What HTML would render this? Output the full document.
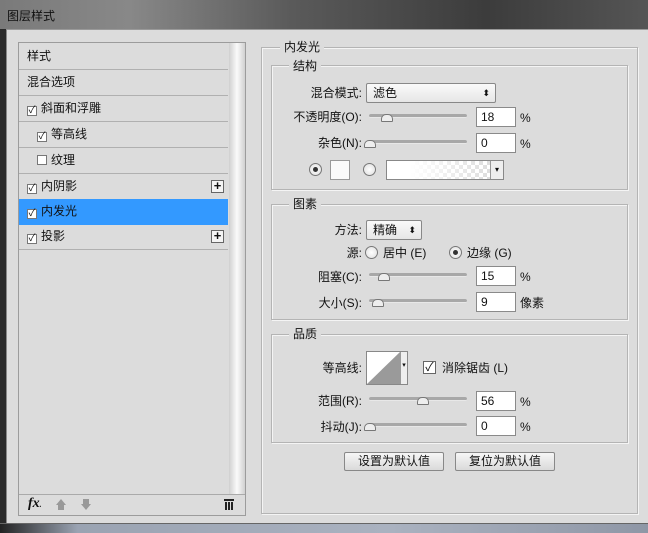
<!DOCTYPE html>
<html><head><meta charset="utf-8"><style>
*{margin:0;padding:0;box-sizing:border-box}
body{width:648px;height:533px;overflow:hidden;background:#dcdcdc;font-family:"Liberation Sans","Noto Sans CJK SC",sans-serif;font-size:12px;color:#111;position:relative}
.a{position:absolute}
.t{position:absolute;white-space:nowrap;line-height:14px}
.r{text-align:right}
.box{position:absolute;border:1px solid #b4b4b4;box-shadow:1px 1px 0 #f4f4f4, inset 1px 1px 0 #f4f4f4}
.lg{position:absolute;background:#dcdcdc;padding:0 4px;line-height:14px}
.inp{position:absolute;background:#fff;border:1px solid #8a8a8a;height:20px;width:40px;padding-left:4px;line-height:18px}
.sl{position:absolute;height:4px;width:98px;background:#a8a8a8;border-radius:2px;border-bottom:1px solid #e8e8e8}
.th{position:absolute;width:12px;height:8px;background:#eee;border:1px solid #777;border-radius:5px 5px 1px 1px}
.rad{position:absolute;width:13px;height:13px;border-radius:50%;border:1px solid #777;background:radial-gradient(#fff,#ddd)}
.sel{position:absolute;background:linear-gradient(#fafafa,#e6e6e6);border:1px solid #888;border-radius:2px;height:20px;line-height:18px;padding-left:6px}
.btn{position:absolute;background:linear-gradient(#f6f6f6,#dadada);border:1px solid #888;border-radius:2px;height:19px;line-height:17px;text-align:center}
.it{position:absolute;left:19px;width:209px;height:26px;border-bottom:1px solid #b0b0b0;line-height:25px;padding-left:8px}
.cb{display:inline-block;width:10px;height:10px;border:1px solid #777;background:#fff;vertical-align:-1px;margin-right:4px;position:relative;font-size:10px;line-height:8px;text-align:center}
.plus{position:absolute;right:4px;top:6px;width:13px;height:13px;border:1px solid #666;background:#f4f4f4;font-size:13px;line-height:10px;text-align:center;font-weight:bold}
</style></head><body>
<div class="a" style="left:0;top:0;width:648px;height:30px;background:linear-gradient(90deg,#7a7a7a 0%,#888 20%,#5a5a5a 45%,#3c3c3c 75%,#555 100%)"></div>
<div class="t" style="left:7px;top:9px;color:#111">图层样式</div>
<div class="a" style="left:0;top:29px;width:6px;height:504px;background:#2a2a2a"></div>
<div class="a" style="left:6px;top:29px;width:642px;height:494px;background:#dcdcdc;border-top:1px solid #999;border-left:1px solid #888"></div>
<div class="a" style="left:0;top:523px;width:648px;height:10px;background:linear-gradient(90deg,#222 0%,#9aa3b2 12%,#aab2c0 60%,#8f97a6 100%);border-top:1px solid #666"></div>

<div class="a" style="left:18px;top:42px;width:228px;height:474px;border:1px solid #9c9c9c;background:#dcdcdc"></div>
<div class="a" style="left:229px;top:43px;width:16px;height:451px;background:linear-gradient(90deg,#d0d0d0,#fafafa 50%,#d0d0d0)"></div>
<div class="it" style="top:44px">样式</div>
<div class="it" style="top:70px">混合选项</div>
<div class="it" style="top:96px"><span class="cb">✓</span>斜面和浮雕</div>
<div class="it" style="top:122px;padding-left:18px"><span class="cb">✓</span>等高线</div>
<div class="it" style="top:148px;padding-left:18px"><span class="cb"></span>纹理</div>
<div class="it" style="top:174px"><span class="cb">✓</span>内阴影<span class="plus">+</span></div>
<div class="it" style="top:199px;background:#3399ff;border-bottom-color:#3399ff"><span class="cb">✓</span>内发光</div>
<div class="it" style="top:224px"><span class="cb">✓</span>投影<span class="plus">+</span></div>
<div class="a" style="left:19px;top:494px;width:226px;height:1px;background:#aaa"></div>
<div class="t" style="left:28px;top:497px;font-style:italic;font-weight:bold;font-family:'Liberation Serif',serif;font-size:14px">fx<span style="font-size:8px">.</span></div>
<div class="a" style="left:56px;top:499px;width:0;height:0;border:5px solid transparent;border-bottom:6px solid #999;border-top:0"></div>
<div class="a" style="left:58px;top:505px;width:6px;height:5px;background:#999"></div>
<div class="a" style="left:83px;top:499px;width:6px;height:5px;background:#999"></div>
<div class="a" style="left:81px;top:504px;width:0;height:0;border:5px solid transparent;border-top:6px solid #999;border-bottom:0"></div>
<div class="a" style="left:224px;top:499px;width:10px;height:2px;background:#222"></div>
<div class="a" style="left:225px;top:502px;width:8px;height:8px;background:repeating-linear-gradient(90deg,#222 0 2px,#ddd 2px 3px)"></div>

<div class="box" style="left:261px;top:47px;width:377px;height:467px"></div>
<div class="lg" style="left:280px;top:40px">内发光</div>

<div class="box" style="left:271px;top:65px;width:357px;height:125px"></div>
<div class="lg" style="left:289px;top:59px">结构</div>
<div class="t r" style="left:280px;width:82px;top:86px">混合模式:</div>
<div class="sel" style="left:366px;top:83px;width:130px">滤色<span style="position:absolute;right:5px;top:0;font-size:9px">⬍</span></div>
<div class="t r" style="left:280px;width:82px;top:110px">不透明度(O):</div>
<div class="sl" style="left:369px;top:114px"></div><div class="th" style="left:381px;top:114px"></div>
<div class="inp" style="left:476px;top:107px">18</div><div class="t" style="left:520px;top:111px">%</div>
<div class="t r" style="left:280px;width:82px;top:136px">杂色(N):</div>
<div class="sl" style="left:369px;top:140px"></div><div class="th" style="left:364px;top:140px"></div>
<div class="inp" style="left:476px;top:133px">0</div><div class="t" style="left:520px;top:137px">%</div>
<div class="rad" style="left:309px;top:163px"><div class="a" style="left:3px;top:3px;width:5px;height:5px;border-radius:50%;background:#333"></div></div>
<div class="a" style="left:330px;top:160px;width:20px;height:20px;background:#fafafa;border:1px solid #999"></div>
<div class="rad" style="left:363px;top:163px"></div>
<div class="a" style="left:386px;top:160px;width:118px;height:20px;border:1px solid #888;background:linear-gradient(90deg,#fff 20%,rgba(255,255,255,0) 90%),repeating-conic-gradient(#ddd 0 25%,#fff 0 50%) 0 0/8px 8px"></div>
<div class="a" style="left:490px;top:161px;width:13px;height:18px;background:#eee;border-left:1px solid #999;font-size:8px;text-align:center;line-height:18px">▾</div>

<div class="box" style="left:271px;top:204px;width:357px;height:116px"></div>
<div class="lg" style="left:289px;top:197px">图素</div>
<div class="t r" style="left:280px;width:82px;top:223px">方法:</div>
<div class="sel" style="left:366px;top:220px;width:56px">精确<span style="position:absolute;right:5px;top:0;font-size:9px">⬍</span></div>
<div class="t r" style="left:280px;width:82px;top:246px">源:</div>
<div class="rad" style="left:365px;top:246px"></div><div class="t" style="left:383px;top:246px">居中 (E)</div>
<div class="rad" style="left:449px;top:246px"><div class="a" style="left:3px;top:3px;width:5px;height:5px;border-radius:50%;background:#333"></div></div><div class="t" style="left:467px;top:246px">边缘 (G)</div>
<div class="t r" style="left:280px;width:82px;top:270px">阻塞(C):</div>
<div class="sl" style="left:369px;top:273px"></div><div class="th" style="left:378px;top:273px"></div>
<div class="inp" style="left:476px;top:266px">15</div><div class="t" style="left:520px;top:270px">%</div>
<div class="t r" style="left:280px;width:82px;top:296px">大小(S):</div>
<div class="sl" style="left:369px;top:299px"></div><div class="th" style="left:372px;top:299px"></div>
<div class="inp" style="left:476px;top:292px">9</div><div class="t" style="left:520px;top:296px">像素</div>

<div class="box" style="left:271px;top:334px;width:357px;height:109px"></div>
<div class="lg" style="left:289px;top:327px">品质</div>
<div class="t r" style="left:280px;width:82px;top:361px">等高线:</div>
<div class="a" style="left:366px;top:351px;width:42px;height:34px;border:1px solid #888;background:#fff"></div>
<svg class="a" style="left:367px;top:352px" width="33" height="32"><polygon points="0,32 33,0 33,32" fill="#9a9a9a"/></svg>
<div class="a" style="left:400px;top:352px;width:7px;height:32px;background:#eee;border-left:1px solid #999;font-size:7px;text-align:center;line-height:28px">▾</div>
<div class="a" style="left:423px;top:361px;width:13px;height:13px;border:1px solid #666;background:#fff;font-size:12px;line-height:11px;text-align:center">✓</div>
<div class="t" style="left:442px;top:361px">消除锯齿 (L)</div>
<div class="t r" style="left:280px;width:82px;top:394px">范围(R):</div>
<div class="sl" style="left:369px;top:397px"></div><div class="th" style="left:417px;top:397px"></div>
<div class="inp" style="left:476px;top:391px">56</div><div class="t" style="left:520px;top:395px">%</div>
<div class="t r" style="left:280px;width:82px;top:420px">抖动(J):</div>
<div class="sl" style="left:369px;top:423px"></div><div class="th" style="left:364px;top:423px"></div>
<div class="inp" style="left:476px;top:416px">0</div><div class="t" style="left:520px;top:420px">%</div>

<div class="btn" style="left:344px;top:452px;width:100px">设置为默认值</div>
<div class="btn" style="left:455px;top:452px;width:100px">复位为默认值</div>
</body></html>
